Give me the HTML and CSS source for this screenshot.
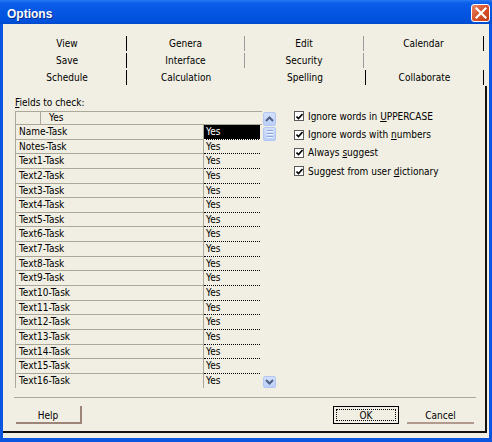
FILE: index.html
```html
<!DOCTYPE html>
<html>
<head>
<meta charset="utf-8">
<link rel="stylesheet" href="styles.css">
</head>
<body>
<div class="window">
  <div class="titlebar">
    <span class="title">Options</span>
    <span class="close"><svg width="12" height="12" viewBox="0 0 12 12"><path d="M1.5 1.5 L10.5 10.5 M10.5 1.5 L1.5 10.5" stroke="#fff" stroke-width="2.2" stroke-linecap="square"/></svg></span>
  </div>
  <div class="client">
    <div class="tabs">
      <div class="tabrow">
        <div class="tab w1"><span class="tl">View</span><i class="sep dark"></i></div>
        <div class="tab w2"><span class="tl">Genera</span><i class="sep gray"></i></div>
        <div class="tab w3"><span class="tl">Edit</span><i class="sep gray"></i></div>
        <div class="tab w4"><span class="tl">Calendar</span><i class="sep dark"></i></div>
      </div>
      <div class="tabrow">
        <div class="tab w1"><span class="tl">Save</span><i class="sep dark"></i></div>
        <div class="tab w2"><span class="tl">Interface</span><i class="sep gray"></i></div>
        <div class="tab w3"><span class="tl">Security</span><i class="sep gray"></i></div>
        <div class="tab w4"><span class="tl"></span></div>
      </div>
      <div class="tabrow">
        <div class="tab w1"><span class="tl">Schedule</span><i class="sep dark"></i></div>
        <div class="tab w2"><span class="tl">Calculation</span></div>
        <div class="tab w3b"><span class="tl">Spelling</span><i class="sep dark"></i></div>
        <div class="tab w4b"><span class="tl">Collaborate</span><i class="sep dark"></i></div>
      </div>
    </div>
    <div class="page">
      <div class="main">
        <div class="leftcol">
          <div class="label"><u>F</u>ields to check:</div>
          <div class="grid">
            <div class="gridbody">
              <div class="hdr"><div class="h0"></div><div class="h1">Yes</div></div>
              <div class="row"><div class="name">Name-Task</div><div class="val sel">Yes</div></div>
              <div class="row"><div class="name">Notes-Task</div><div class="val">Yes</div></div>
              <div class="row"><div class="name">Text1-Task</div><div class="val">Yes</div></div>
              <div class="row"><div class="name">Text2-Task</div><div class="val">Yes</div></div>
              <div class="row"><div class="name">Text3-Task</div><div class="val">Yes</div></div>
              <div class="row"><div class="name">Text4-Task</div><div class="val">Yes</div></div>
              <div class="row"><div class="name">Text5-Task</div><div class="val">Yes</div></div>
              <div class="row"><div class="name">Text6-Task</div><div class="val">Yes</div></div>
              <div class="row"><div class="name">Text7-Task</div><div class="val">Yes</div></div>
              <div class="row"><div class="name">Text8-Task</div><div class="val">Yes</div></div>
              <div class="row"><div class="name">Text9-Task</div><div class="val">Yes</div></div>
              <div class="row"><div class="name">Text10-Task</div><div class="val">Yes</div></div>
              <div class="row"><div class="name">Text11-Task</div><div class="val">Yes</div></div>
              <div class="row"><div class="name">Text12-Task</div><div class="val">Yes</div></div>
              <div class="row"><div class="name">Text13-Task</div><div class="val">Yes</div></div>
              <div class="row"><div class="name">Text14-Task</div><div class="val">Yes</div></div>
              <div class="row"><div class="name">Text15-Task</div><div class="val">Yes</div></div>
              <div class="row last"><div class="name">Text16-Task</div><div class="val">Yes</div></div>
            </div>
            <div class="sb">
              <div class="sbtn up"><svg width="9" height="6" viewBox="0 0 9 6"><path d="M1 5 L4.5 1.5 L8 5" fill="none" stroke="#4d6185" stroke-width="2"/></svg></div>
              <div class="sbtn thumb"><span class="grip"></span><span class="grip"></span><span class="grip"></span></div>
              <div class="track"></div>
              <div class="sbtn down"><svg width="9" height="6" viewBox="0 0 9 6"><path d="M1 1 L4.5 4.5 L8 1" fill="none" stroke="#4d6185" stroke-width="2"/></svg></div>
            </div>
          </div>
        </div>
        <div class="opts">
          <div class="opt"><span class="cb"><svg width="7" height="7" viewBox="0 0 7 7"><path d="M0.5 3.5 L2.5 5.5 L6.5 1" fill="none" stroke="#000" stroke-width="1.6"/></svg></span><span>Ignore words in <u>U</u>PPERCASE</span></div>
          <div class="opt"><span class="cb"><svg width="7" height="7" viewBox="0 0 7 7"><path d="M0.5 3.5 L2.5 5.5 L6.5 1" fill="none" stroke="#000" stroke-width="1.6"/></svg></span><span>Ignore words with <u>n</u>umbers</span></div>
          <div class="opt"><span class="cb"><svg width="7" height="7" viewBox="0 0 7 7"><path d="M0.5 3.5 L2.5 5.5 L6.5 1" fill="none" stroke="#000" stroke-width="1.6"/></svg></span><span>Always <u>s</u>uggest</span></div>
          <div class="opt"><span class="cb"><svg width="7" height="7" viewBox="0 0 7 7"><path d="M0.5 3.5 L2.5 5.5 L6.5 1" fill="none" stroke="#000" stroke-width="1.6"/></svg></span><span>Suggest from user <u>d</u>ictionary</span></div>
        </div>
      </div>
      <div class="hline"></div>
      <div class="buttons">
        <div class="btn help">Help</div>
        <div class="spacer"></div>
        <div class="btn ok"><span class="focus">OK</span></div>
        <div class="btn cancel">Cancel</div>
      </div>
    </div>
  </div>
</div>
</body>
</html>
```
FILE: styles.css
```css
html, body {
  margin: 0;
  padding: 0;
}
body {
  width: 492px;
  height: 442px;
  overflow: hidden;
  font-family: "DejaVu Sans Condensed", "Liberation Sans", sans-serif;
  font-size: 10px;
  color: #000;
}
.window {
  width: 492px;
  height: 442px;
  background: #0a56e0;
  display: flex;
  flex-direction: column;
  box-sizing: border-box;
}
.titlebar {
  height: 24px;
  flex: none;
  display: flex;
  align-items: center;
  padding: 0 2px 0 7px;
  background: linear-gradient(#2a7af5 0px, #0a5ee8 3px, #0656e4 12px, #0050da 22px, #0048c8 24px);
}
.title {
  flex: 1;
  font-family: "Liberation Sans", sans-serif;
  font-weight: bold;
  font-size: 12px;
  color: #fff;
  text-shadow: 1px 1px 0 #0a2a8a;
  padding-top: 3px;
}
.close {
  width: 19px;
  height: 18px;
  box-sizing: border-box;
  border: 1px solid #fff;
  border-radius: 3px;
  background: linear-gradient(135deg, #e98a6a 0%, #d9542f 45%, #c23a12 100%);
  display: flex;
  align-items: center;
  justify-content: center;
  margin-top: 1px;
}
.client {
  margin: 0 3px 4px 3px;
  height: 414px;
  background: #f1efe3;
  display: flex;
  flex-direction: column;
}
.tabs {
  padding: 11px 0 0 5px;
  height: 51px;
  flex: none;
}
.tabrow {
  display: flex;
  height: 17px;
}
.tab {
  display: flex;
  align-items: center;
  height: 17px;
}
.w1 { width: 119px; }
.w2 { width: 118px; }
.w3 { width: 119px; }
.w4 { width: 120px; }
.w3b { width: 121px; }
.w4b { width: 118px; }
.tl {
  flex: 1;
  text-align: center;
  white-space: nowrap;
}
.sep {
  width: 1px;
  height: 15px;
  flex: none;
}
.sep.dark { background: #000; }
.sep.gray { background: #9a9a9a; }
.page {
  flex: none;
  height: 347px;
  box-sizing: border-box;
  margin-right: 2px;
  border-right: 2px solid #111;
  border-bottom: 2px solid #111;
  display: flex;
  flex-direction: column;
}
.main {
  display: flex;
  padding-left: 12px;
}
.leftcol {
  display: flex;
  flex-direction: column;
}
.label {
  padding-top: 10px;
  height: 13px;
  line-height: 13px;
  margin-bottom: 2px;
}
.grid {
  display: flex;
  height: 277px;
  width: 262px;
}
.gridbody {
  width: 247px;
  box-sizing: border-box;
  border-left: 1px solid #aca899;
  overflow: hidden;
}
.hdr {
  display: flex;
  height: 14px;
  box-sizing: border-box;
  border-top: 1px solid #aca899;
  border-bottom: 1px solid #aca899;
  line-height: 12px;
}
.h0 {
  width: 24px;
  border-right: 1px solid #aca899;
}
.h1 {
  padding-left: 8px;
}
.row {
  display: flex;
  height: 14.65px;
  line-height: 14px;
}
.row.last {
  height: 16px;
}
.name {
  width: 188px;
  box-sizing: border-box;
  padding-left: 3px;
  border-right: 1px solid #aca899;
  border-bottom: 1px solid #aca899;
  white-space: nowrap;
}
.row.last .name {
  border-bottom: none;
}
.val {
  width: 56px;
  box-sizing: border-box;
  padding-left: 2px;
  border-bottom: 1px dotted #000;
}
.row.last .val {
  border-bottom: none;
}
.val.sel {
  background: #000;
  color: #fff;
  border-bottom: 1px dotted #fff;
}
.sb {
  width: 15px;
  display: flex;
  flex-direction: column;
  padding: 1px 1px 0 1px;
  box-sizing: border-box;
}
.sbtn {
  height: 14px;
  box-sizing: border-box;
  border: 1px solid #b3c6f2;
  border-radius: 2px;
  background: linear-gradient(#d2e0fd, #bccffa);
  display: flex;
  align-items: center;
  justify-content: center;
}
.thumb {
  margin-top: 1px;
  flex-direction: column;
  gap: 1px;
}
.grip {
  width: 6px;
  height: 1px;
  background: #8fa6d8;
  border-bottom: 1px solid #eef3ff;
}
.track {
  flex: 1;
}
.down {
  height: 12px;
}
.opts {
  margin-left: 17px;
  padding-top: 21px;
  display: flex;
  flex-direction: column;
}
.opt {
  display: flex;
  align-items: center;
  height: 18.4px;
  white-space: nowrap;
}
.cb {
  width: 8px;
  height: 8px;
  border: 1px solid #5a5a5a;
  background: #fff;
  display: flex;
  align-items: center;
  justify-content: center;
  margin-right: 4px;
  flex: none;
}
.hline {
  margin: 9px 0 0 11px;
  width: 462px;
  height: 1px;
  background: #aca899;
}
.buttons {
  display: flex;
  margin-top: 8px;
  height: 18px;
  padding: 0 11px 0 13px;
}
.btn {
  height: 18px;
  box-sizing: border-box;
  display: flex;
  align-items: center;
  justify-content: center;
}
.help {
  width: 66px;
  border-right: 2px solid #9c8478;
  border-bottom: 2px solid #9c8478;
  padding-top: 2px;
}
.spacer {
  flex: 1;
}
.ok {
  width: 66px;
  border: 1px solid #000;
  padding: 2px;
}
.focus {
  width: 100%;
  height: 100%;
  box-sizing: border-box;
  border: 1px dotted #000;
  display: flex;
  align-items: center;
  justify-content: center;
}
.cancel {
  width: 67px;
  margin-left: 8px;
  border-bottom: 2px solid #b09a8e;
  padding-top: 2px;
}
```
